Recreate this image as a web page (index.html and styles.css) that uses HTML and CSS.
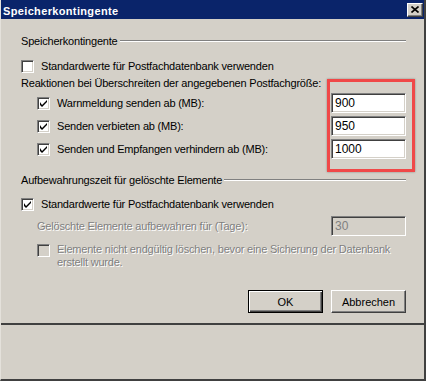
FILE: index.html
```html
<!DOCTYPE html>
<html lang="de">
<head>
    <meta charset="UTF-8">
    <title>Speicherkontingente</title>
    <link rel="stylesheet" href="styles.css">
</head>
<body>

    <div class="window">
        <div class="titlebar">
            <span class="title">Speicherkontingente</span>
            <span class="close"><svg width="8" height="7" viewBox="0 0 8 7"><path d="M0.5 0.5l7 6M7.5 0.5l-7 6" stroke="#000" stroke-width="1.6"/></svg></span>
        </div>

        <div class="content">
            <!-- Gruppe: Speicherkontingente -->
            <div class="group-head">
                <span>Speicherkontingente</span>
                <div class="etched"></div>
            </div>

            <div class="row row-cb1">
                <span class="cb"></span>
                <span>Standardwerte für Postfachdatenbank verwenden</span>
            </div>

            <div class="row row-text">Reaktionen bei Überschreiten der angegebenen Postfachgröße:</div>

            <div class="row row-limit first">
                <span class="cb checked"><svg width="7" height="7" viewBox="0 0 7 7"><path d="M0 2v3l2 2 5-5V0L2 5z" fill="#000"/></svg></span>
                <span>Warnmeldung senden ab (MB):</span>
                <span class="textbox">900</span>
            </div>
            <div class="row row-limit">
                <span class="cb checked"><svg width="7" height="7" viewBox="0 0 7 7"><path d="M0 2v3l2 2 5-5V0L2 5z" fill="#000"/></svg></span>
                <span>Senden verbieten ab (MB):</span>
                <span class="textbox">950</span>
            </div>
            <div class="row row-limit">
                <span class="cb checked"><svg width="7" height="7" viewBox="0 0 7 7"><path d="M0 2v3l2 2 5-5V0L2 5z" fill="#000"/></svg></span>
                <span>Senden und Empfangen verhindern ab (MB):</span>
                <span class="textbox">1000</span>
            </div>

            <!-- Gruppe: Aufbewahrungszeit -->
            <div class="group-head second">
                <span>Aufbewahrungszeit für gelöschte Elemente</span>
                <div class="etched"></div>
            </div>

            <div class="row row-cb2">
                <span class="cb checked"><svg width="7" height="7" viewBox="0 0 7 7"><path d="M0 2v3l2 2 5-5V0L2 5z" fill="#000"/></svg></span>
                <span>Standardwerte für Postfachdatenbank verwenden</span>
            </div>

            <div class="row row-days">
                <span class="disabled">Gelöschte Elemente aufbewahren für (Tage):</span>
                <span class="textbox off">30</span>
            </div>

            <div class="row-multi">
                <span class="cb off"></span>
                <span class="disabled">Elemente nicht endgültig löschen, bevor eine Sicherung der Datenbank<br>erstellt wurde.</span>
            </div>

            <div class="buttons">
                <button class="btn default">OK</button>
                <button class="btn">Abbrechen</button>
            </div>
        </div>

        <div class="lower"></div>

        <!-- Markierung -->
        <div class="highlight"></div>
    </div>

</body>
</html>
```

FILE: styles.css
```css
/* Allgemein */
body {
    margin: 0;
    background: #d4d0c8;
    font-family: "Liberation Sans", Arial, sans-serif;
    font-size: 11px;
    letter-spacing: -0.2px;
    color: #000;
}

.window {
    position: relative;
    width: 426px;
    height: 381px;
    box-sizing: border-box;
    border-left: 1px solid #e4e1db;
    border-right: 2px solid #404040;
    border-bottom: 2px solid #404040;
    background: #d4d0c8;
    overflow: hidden;
}

/* Titelleiste */
.titlebar {
    height: 19px;
    background: #0a246a;
    display: flex;
    align-items: center;
    justify-content: space-between;
    padding: 0 1px 0 2px;
}
.title {
    color: #fff;
    font-weight: bold;
    font-size: 11px;
    letter-spacing: 0.35px;
    margin-top: 2px;
}
.close {
    width: 16px;
    height: 14px;
    box-sizing: border-box;
    background: #d4d0c8;
    border-top: 1px solid #fff;
    border-left: 1px solid #fff;
    border-right: 1px solid #404040;
    border-bottom: 1px solid #404040;
    box-shadow: inset -1px -1px 0 #808080;
    display: flex;
    align-items: center;
    justify-content: center;
}

/* Inhalt */
.content {
    padding: 15px 18px 0 20px;
    height: 304px;
    box-sizing: border-box;
}

.group-head {
    display: flex;
    align-items: center;
    height: 14px;
}
.group-head.second {
    margin-top: 14px;
}
.etched {
    flex: 1;
    height: 0;
    border-top: 1px solid #808080;
    border-bottom: 1px solid #fff;
    margin-left: 2px;
}

.row {
    display: flex;
    align-items: center;
    height: 14px;
}
.row-cb1 { margin-top: 11px; }
.row-text { margin-top: 3px; }
.row-limit {
    height: 20px;
    margin-top: 3px;
    padding-left: 16px;
}
.row-cb2 { margin-top: 10px; }
.row-days {
    height: 20px;
    margin-top: 5px;
    padding-left: 16px;
}

/* Checkbox */
.cb {
    width: 13px;
    height: 13px;
    box-sizing: border-box;
    flex: none;
    background: #fff;
    border-top: 1px solid #808080;
    border-left: 1px solid #808080;
    border-right: 1px solid #fff;
    border-bottom: 1px solid #fff;
    box-shadow: inset 1px 1px 0 #404040, inset -1px -1px 0 #d4d0c8;
    margin-right: 7px;
    display: flex;
    align-items: center;
    justify-content: center;
}
.cb.off {
    background: #d4d0c8;
}

/* Eingabefeld */
.textbox {
    margin-left: auto;
    width: 75px;
    height: 20px;
    box-sizing: border-box;
    background: #fff;
    border-top: 1px solid #808080;
    border-left: 1px solid #808080;
    border-right: 1px solid #fff;
    border-bottom: 1px solid #fff;
    box-shadow: inset 1px 1px 0 #404040, inset -1px -1px 0 #d4d0c8;
    padding: 0 3px;
    display: flex;
    align-items: center;
    font-size: 12px;
    letter-spacing: 0;
}
.textbox.off {
    background: #d4d0c8;
    color: #808080;
}

.disabled {
    color: #808080;
    text-shadow: 1px 1px 0 #fff;
}

.row-multi {
    display: flex;
    align-items: flex-start;
    margin-top: 7px;
    padding-left: 16px;
    line-height: 13px;
}
.row-multi .cb {
    margin-top: 1px;
}

/* Buttons */
.buttons {
    display: flex;
    justify-content: flex-end;
    gap: 8px;
    margin-top: 21px;
}
.btn {
    width: 75px;
    height: 23px;
    box-sizing: border-box;
    font-family: inherit;
    font-size: 11px;
    color: #000;
    background: #d4d0c8;
    border-top: 1px solid #fff;
    border-left: 1px solid #fff;
    border-right: 1px solid #404040;
    border-bottom: 1px solid #404040;
    box-shadow: inset -1px -1px 0 #808080;
    padding: 0;
}
.btn.default {
    border: 1px solid #000;
    box-shadow: inset 1px 1px 0 #fff, inset -1px -1px 0 #404040, inset -2px -2px 0 #808080;
}

/* Untere Leiste */
.lower {
    border-top: 2px solid #404040;
    height: 54px;
}

/* rote Markierung */
.highlight {
    position: absolute;
    left: 326px;
    top: 79px;
    width: 88px;
    height: 93px;
    box-sizing: border-box;
    border: 3px solid #f04848;
    box-shadow: 0 0 2px rgba(0,0,0,0.35);
}
```
